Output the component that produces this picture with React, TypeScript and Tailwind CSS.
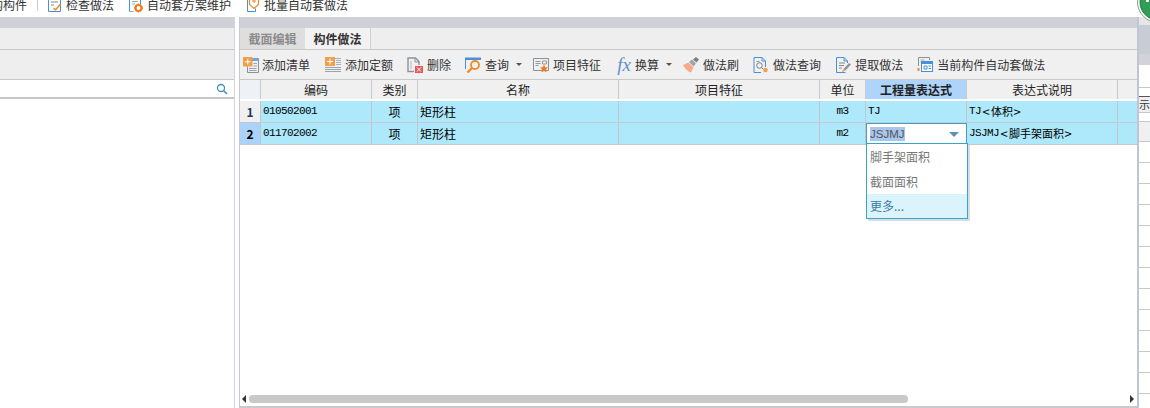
import React from "react";

function IconDoc() {
  return (
    <svg width="16" height="16" viewBox="0 0 16 16" fill="none">
      <path d="M1.5 1.5h12v13h-12z" stroke="#4a90d9" />
      <path d="M4 5h7M4 8h3" stroke="#888" />
      <path d="M6.500 11l2 2 5-6" stroke="#ee8a2d" strokeWidth="1.500" />
    </svg>
  );
}
function IconGear() {
  return (
    <svg width="16" height="16" viewBox="0 0 16 16" fill="none">
      <path d="M1.500 14.500v-13h11v6" stroke="#4a90d9" />
      <path d="M1.500 14.500h4M4 4.500h6M4 7h3" stroke="#8aa" />
      <circle cx="10.500" cy="11" r="3" stroke="#ee7d22" strokeWidth="2.200" />
      <path d="M10.500 6.500v1.500M10.500 14v1.500M6 11h1.500M13.500 11H15" stroke="#ee7d22" strokeWidth="1.500" />
    </svg>
  );
}
function IconBatch() {
  return (
    <svg width="16" height="16" viewBox="0 0 16 16" fill="none">
      <path d="M1.500 2.500h2v12h8v-3" stroke="#4a90d9" />
      <path d="M5.500 0.500h9v7l-4.500 4-4.500-4z" fill="#fff" stroke="#ee8a2d" strokeWidth="1.200" />
      <path d="M8 4h4M10 2v4" stroke="#ee8a2d" />
    </svg>
  );
}
function IconAddList() {
  return (
    <svg width="16" height="16" viewBox="0 0 16 16" fill="none">
      <path d="M9 1h7v3H9z" fill="#6ea6e0" />
      <path d="M15.500 4v11.500H4.500V9.500" stroke="#8a9299" />
      <path d="M6 11.500h7.500M6 13.500h7.500M10.500 6.500h3.500M10.500 9h3.500" stroke="#9aa3ad" />
      <rect x="0" y="0" width="9.500" height="9.500" fill="#f0a04c" />
      <path d="M4.750 2v5.500M2 4.750h5.500" stroke="#fff" />
    </svg>
  );
}
function IconAddQuota() {
  return (
    <svg width="16" height="16" viewBox="0 0 16 16" fill="none">
      <path d="M10 1.500h6M11 3.500h5M11 5.500h5M11 7.500h5" stroke="#a8afb8" />
      <path d="M0 10.500h16M0 12.500h16M0 14.500h16" stroke="#9aa3ad" />
      <rect x="0" y="0" width="10" height="9" fill="#f0a04c" />
      <path d="M5 1.500v6M2 4.500h6" stroke="#fff" />
    </svg>
  );
}
function IconDelete() {
  return (
    <svg width="16" height="16" viewBox="0 0 16 16" fill="none">
      <path d="M7 14.500H1V1h7.500L12 4.500V8" stroke="#8a9299" strokeWidth="1.400" />
      <path d="M4 4v8" stroke="#c4c8cc" strokeWidth="1.400" />
      <path d="M8 1.500v3.500h4" stroke="#8a9299" />
      <rect x="8" y="9" width="8" height="7" fill="#e5585b" />
      <path d="M10 10.500l4 4M14 10.500l-4 4" stroke="#fff" />
    </svg>
  );
}
function IconQuery() {
  return (
    <svg width="16" height="16" viewBox="0 0 16 16" fill="none">
      <path d="M0 0.500h16v2.500H0z" fill="#4a90d9" />
      <path d="M0.500 3v9" stroke="#4a90d9" />
      <circle cx="10" cy="8" r="4" stroke="#ee8a2d" strokeWidth="1.800" />
      <path d="M7 11l-4.500 4.500" stroke="#ee8a2d" strokeWidth="2.400" />
    </svg>
  );
}
function IconFeature() {
  return (
    <svg width="16" height="16" viewBox="0 0 16 16" fill="none">
      <path d="M0.500 1.500h15v12h-15z" stroke="#8a9299" />
      <path d="M2.500 4.500h5M2.500 6.500h5M2.500 8.500h3M9.500 4h4v3h-4z" stroke="#999" />
      <path d="M11 7.500l1.200 2.800 2.800.3-2 1.900.5 2.700-2.500-1.300-2.500 1.300.5-2.700-2-1.900 2.800-.3z" fill="#ee7d22" />
    </svg>
  );
}
function IconBrush() {
  return (
    <svg width="16" height="16" viewBox="0 0 16 16" fill="none">
      <path d="M0 8l5.500-2.500 5 5L8 15.500C5 15 1.500 11 0 8z" fill="#f9a98a" />
      <path d="M6 5l3-2.500 4 4-2.500 3z" fill="#a0a4a8" />
      <path d="M10 2.500L13 0l3 2.500-2.500 3z" fill="#7b7f83" />
    </svg>
  );
}
function IconMethodQuery() {
  return (
    <svg width="16" height="16" viewBox="0 0 16 16" fill="none">
      <path d="M8 15.500H1V0.500h8l3.500 3.500v6" stroke="#4a90d9" />
      <path d="M9 0.500v3.500h3.500" stroke="#4a90d9" />
      <circle cx="6.500" cy="8.500" r="2.800" stroke="#7a8288" />
      <path d="M8.500 10.500l2 2" stroke="#7a8288" />
      <path d="M3.500 4.500h3" stroke="#999" />
      <circle cx="12.500" cy="13" r="2.300" fill="#f0a04c" />
    </svg>
  );
}
function IconExtract() {
  return (
    <svg width="16" height="16" viewBox="0 0 16 16" fill="none">
      <path d="M12.500 6V4L9 0.500H1.500v15h9" stroke="#4a90d9" />
      <path d="M9 0.500V4h3.500" stroke="#4a90d9" />
      <path d="M4 6h6M4 8.500h5M4 11h3" stroke="#888" />
      <path d="M8.500 12l5.500-6 2 1.500-5.500 6z" fill="#8f959b" />
      <path d="M6.500 15.500l2-3.500 2 1.500z" fill="#f0a04c" />
    </svg>
  );
}
function IconAuto() {
  return (
    <svg width="16" height="16" viewBox="0 0 16 16" fill="none">
      <path d="M1.500 9V0.500h11V3" stroke="#8a9299" />
      <path d="M3.500 3h4M3.500 5h1" stroke="#aaa" />
      <rect x="4.500" y="4.500" width="11" height="10" fill="#fff" stroke="#4a90d9" />
      <path d="M4.500 6h11" stroke="#4a90d9" strokeWidth="2" />
      <path d="M7 9h3v3H7zM11.500 9h2.500M11.500 11.500h2.500" stroke="#4a90d9" />
      <path d="M0.500 11h2v3h-2z" fill="#ee8a2d" />
    </svg>
  );
}

function Tool({ icon, label, caret, gap = "gap-[4px]", ml = "" }: { icon: React.ReactNode; label: string; caret?: boolean; gap?: string; ml?: string }) {
  return (
    <div className={`flex items-center shrink-0 ${gap} ${ml}`}>
      {icon}
      <span className="text-[12px] leading-[16px] text-[#333] whitespace-nowrap">{label}</span>
      {caret && <span className="ml-[3px] w-0 h-0 border-x-[3px] border-x-transparent border-t-[3px] border-t-[#555]" />}
    </div>
  );
}

const cols = [
  { w: "w-[111px]", t: "编码" },
  { w: "w-[46px]", t: "类别" },
  { w: "w-[201px]", t: "名称" },
  { w: "w-[201px]", t: "项目特征" },
  { w: "w-[46px]", t: "单位" },
  { w: "w-[101px]", t: "工程量表达式", active: true },
  { w: "w-[151px]", t: "表达式说明" },
];

const mono = "font-['Liberation_Mono',monospace] text-[11px] tracking-[-0.6px]";

function Row({ n, code, unit, expr, descName, selected }: { n: string; code: string; unit: string; expr: string; descName: string; selected?: boolean }) {
  const cell = "h-full border-r border-[#c4c4cc] flex items-center shrink-0";
  return (
    <div className="flex h-[22px] border-b border-[#c4c8d0] bg-[#aee8fb] text-black">
      <div className={`${cell} w-[21px] justify-center font-bold text-[12px] ${selected ? "bg-[#a9d3fb] text-black" : "bg-[#f0f0f0] text-[#1c3a60]"}`}>{n}</div>
      <div className={`${cell} w-[111px] pl-[2px] ${mono}`}>{code}</div>
      <div className={`${cell} w-[46px] justify-center text-[12px]`}>项</div>
      <div className={`${cell} w-[201px] pl-[2px] text-[12px]`}>矩形柱</div>
      <div className={`${cell} w-[201px]`} />
      <div className={`${cell} w-[46px] justify-center ${mono}`}>{unit}</div>
      {selected ? (
        <div className="relative h-full w-[101px] shrink-0 bg-white border border-[#3aa3c9] flex items-center pl-[3px]">
          <span className="bg-[#a9c6ee] text-[#555] text-[11.5px] leading-[14px] font-['Liberation_Sans',sans-serif]">{expr}</span>
          <span className="absolute right-[7px] top-[8px] w-0 h-0 border-x-[5px] border-x-transparent border-t-[5px] border-t-[#5b93b8]" />
        </div>
      ) : (
        <div className={`${cell} w-[101px] pl-[2px] ${mono}`}>{expr}</div>
      )}
      <div className={`${cell} w-[151px] pl-[2px] whitespace-nowrap`}>
        <span className={mono}>{expr}</span>
        <span className="w-[10px] text-center text-[13px] leading-[16px]">&lt;</span>
        <span className="text-[11px]">{descName}</span>
        <span className="w-[8px] text-center text-[13px] leading-[16px]">&gt;</span>
      </div>
      <div className="flex-1" />
    </div>
  );
}

const stripRows = Array.from({ length: 12 }, (_, i) => i);

export default function App() {
  return (
    <div className="relative w-[1150px] h-[408px] overflow-hidden bg-white flex flex-col font-['Noto_Sans_CJK_SC','Liberation_Sans',sans-serif] text-[#333]">
      {/* Top toolbar: it is cut by the top edge of the picture */}
      <div className="h-[17px] shrink-0 bg-white">
        <div className="h-[9px] flex items-center">
          <span className="ml-[-9px] text-[12px] leading-[16px] whitespace-nowrap">构构件</span>
          <div className="ml-[10px] w-px h-[13px] bg-[#ccc]" />
          <Tool icon={<IconDoc />} label="检查做法" gap="gap-[3px]" ml="ml-[9px]" />
          <Tool icon={<IconGear />} label="自动套方案维护" gap="gap-[3px]" ml="ml-[14px]" />
          <Tool icon={<IconBatch />} label="批量自动套做法" gap="gap-[4px]" ml="ml-[13px]" />
        </div>
      </div>

      <div className="flex flex-1 min-h-0">
        {/* Left panel */}
        <div className="w-[235px] shrink-0 flex flex-col border-r border-[#d4d4da]">
          <div className="h-[11px] bg-[#d0d1d6]" />
          <div className="h-[21px] bg-[#eeeeee]" />
          <div className="h-[30px] bg-[#eeeeee] border-t border-[#c8c8c8]" />
          <div className="h-[20px] bg-white border-t border-[#c8c8c8] border-b-[2px] border-b-[#c8c8cc] flex items-center justify-end pr-[6px]">
            <svg width="12" height="12" viewBox="0 0 12 12" fill="none">
              <circle cx="5" cy="5" r="3.500" stroke="#3f8fc0" strokeWidth="1.300" />
              <path d="M7.500 7.500L11 11" stroke="#3f8fc0" strokeWidth="1.600" />
            </svg>
          </div>
          <div className="flex-1 bg-white" />
        </div>

        {/* Splitter */}
        <div className="w-[5px] shrink-0 bg-white border-r border-[#c8c8d0]" />

        {/* Right panel */}
        <div className="w-[897px] shrink-0 flex flex-col">
          <div className="h-[11px] bg-[#d0d1d6]" />
          <div className="h-[21px] bg-[#eeeeee] flex items-stretch">
            <div className="w-[65px] bg-[#dedede] flex items-center justify-center text-[12px] font-bold text-[#8a8a8a]">截面编辑</div>
            <div className="w-[66px] bg-[#f2f2f2] border-r border-[#d0d0d0] flex items-center justify-center text-[12px] font-bold text-[#333]">构件做法</div>
          </div>
          <div className="h-[30px] bg-[#f0f0f0] border-t border-[#c8c8c8] flex items-center pl-[3px]">
            <Tool icon={<IconAddList />} label="添加清单" gap="gap-[3px]" />
            <Tool icon={<IconAddQuota />} label="添加定额" ml="ml-[15px]" />
            <Tool icon={<IconDelete />} label="删除" ml="ml-[14px]" />
            <Tool icon={<IconQuery />} label="查询" caret ml="ml-[14px]" />
            <Tool icon={<IconFeature />} label="项目特征" ml="ml-[11px]" />
            <Tool icon={<span className="w-[14px] text-center font-['Liberation_Serif',serif] italic text-[19px] leading-[16px] text-[#5f8fc9]">fx</span>} label="换算" caret ml="ml-[16px]" />
            <Tool icon={<IconBrush />} label="做法刷" ml="ml-[11px]" />
            <Tool icon={<IconMethodQuery />} label="做法查询" ml="ml-[14px]" />
            <Tool icon={<IconExtract />} label="提取做法" ml="ml-[14px]" />
            <Tool icon={<IconAuto />} label="当前构件自动套做法" ml="ml-[14px]" />
          </div>
          {/* Grid */}
          <div className="flex-1 relative border-b-[2px] border-[#c8c8d0] bg-white flex flex-col">
            <div className="h-[22px] shrink-0 flex bg-[#f0f0f0] border-t border-[#c8c8c8] border-b-[2px] border-b-white text-[12px] text-[#222]">
              <div className="w-[21px] bg-[#eef1f6] border-r border-[#c8c8d0] shrink-0" />
              {cols.map((c) => (
                <div key={c.t} className={`${c.w} shrink-0 border-r border-[#c8c8d0] flex items-center justify-center ${c.active ? "bg-[#aed4fc] font-bold" : ""}`}>{c.t}</div>
              ))}
              <div className="flex-1" />
            </div>
            <Row n="1" code="010502001" unit="m3" expr="TJ" descName="体积" />
            <Row n="2" code="011702002" unit="m2" expr="JSJMJ" descName="脚手架面积" selected />
            {/* Dropdown list over the grid */}
            <div className="absolute left-[626px] top-[64px] w-[102px] h-[76px] bg-white border border-[#3aa3c9] shadow-[2px_2px_0_#d8dce6] flex flex-col text-[12px] text-[#777]">
              <div className="h-[25px] flex items-center pl-[3px]">脚手架面积</div>
              <div className="h-[25px] flex items-center pl-[3px]">截面面积</div>
              <div className="h-[24px] flex items-center pl-[3px] bg-[#dbf3fb] text-[#3a7ca5]">更多...</div>
            </div>
            <div className="flex-1" />
            {/* Horizontal scrollbar */}
            <div className="h-[8px] mb-[3px] flex items-center pl-[2px] pr-[3px]">
              <span className="w-0 h-0 border-y-[4px] border-y-transparent border-r-[4px] border-r-[#333]" />
              <div className="flex-1 ml-[3px]">
                <div className="h-[8px] w-[659px] rounded-full bg-[#c9c9c9]" />
              </div>
              <span className="w-0 h-0 border-y-[4px] border-y-transparent border-l-[4px] border-l-[#333]" />
            </div>
          </div>
        </div>

        {/* Neighbouring panel, cut by the right edge */}
        <div className="w-[13px] shrink-0 border-l-[2px] border-[#c0c4d4] bg-white flex flex-col overflow-hidden">
          <div className="h-[8px] shrink-0 bg-[#e6e6e8]" />
          <div className="h-[29px] shrink-0 bg-[#c8ccd4]" />
          <div className="h-[11px] shrink-0 bg-[#d2d2d8]" />
          <div className="h-[23px] shrink-0 bg-white border-b border-[#c8c8c8]" />
          <div className="h-[8px] shrink-0 bg-white" />
          <div className="h-[17px] shrink-0 bg-[#eeeeee] border-t border-[#555] border-b border-b-[#c8c8c8] text-[11px] leading-[14px] whitespace-nowrap overflow-hidden">示</div>
          <div className="h-[9px] shrink-0 bg-white border-b border-[#c8c8c8]" />
          <div className="h-[20px] shrink-0 bg-[#f0f0f0] border-b border-[#c8c8c8]" />
          {stripRows.map((i) => (
            <div key={i} className="h-[21px] shrink-0 border-b border-[#c8c8c8]" />
          ))}
        </div>
      </div>

      {/* Round logo cut by the corner */}
      <svg className="absolute right-0 top-0" width="13" height="24" viewBox="0 0 13 24">
        <circle cx="21" cy="2" r="20.500" fill="#fff" stroke="#8a9a90" />
        <circle cx="21" cy="2" r="18" fill="#2f9e57" stroke="#1f7a3f" />
        <path d="M9 0h3v2H9z" fill="#fff" />
      </svg>
    </div>
  );
}
